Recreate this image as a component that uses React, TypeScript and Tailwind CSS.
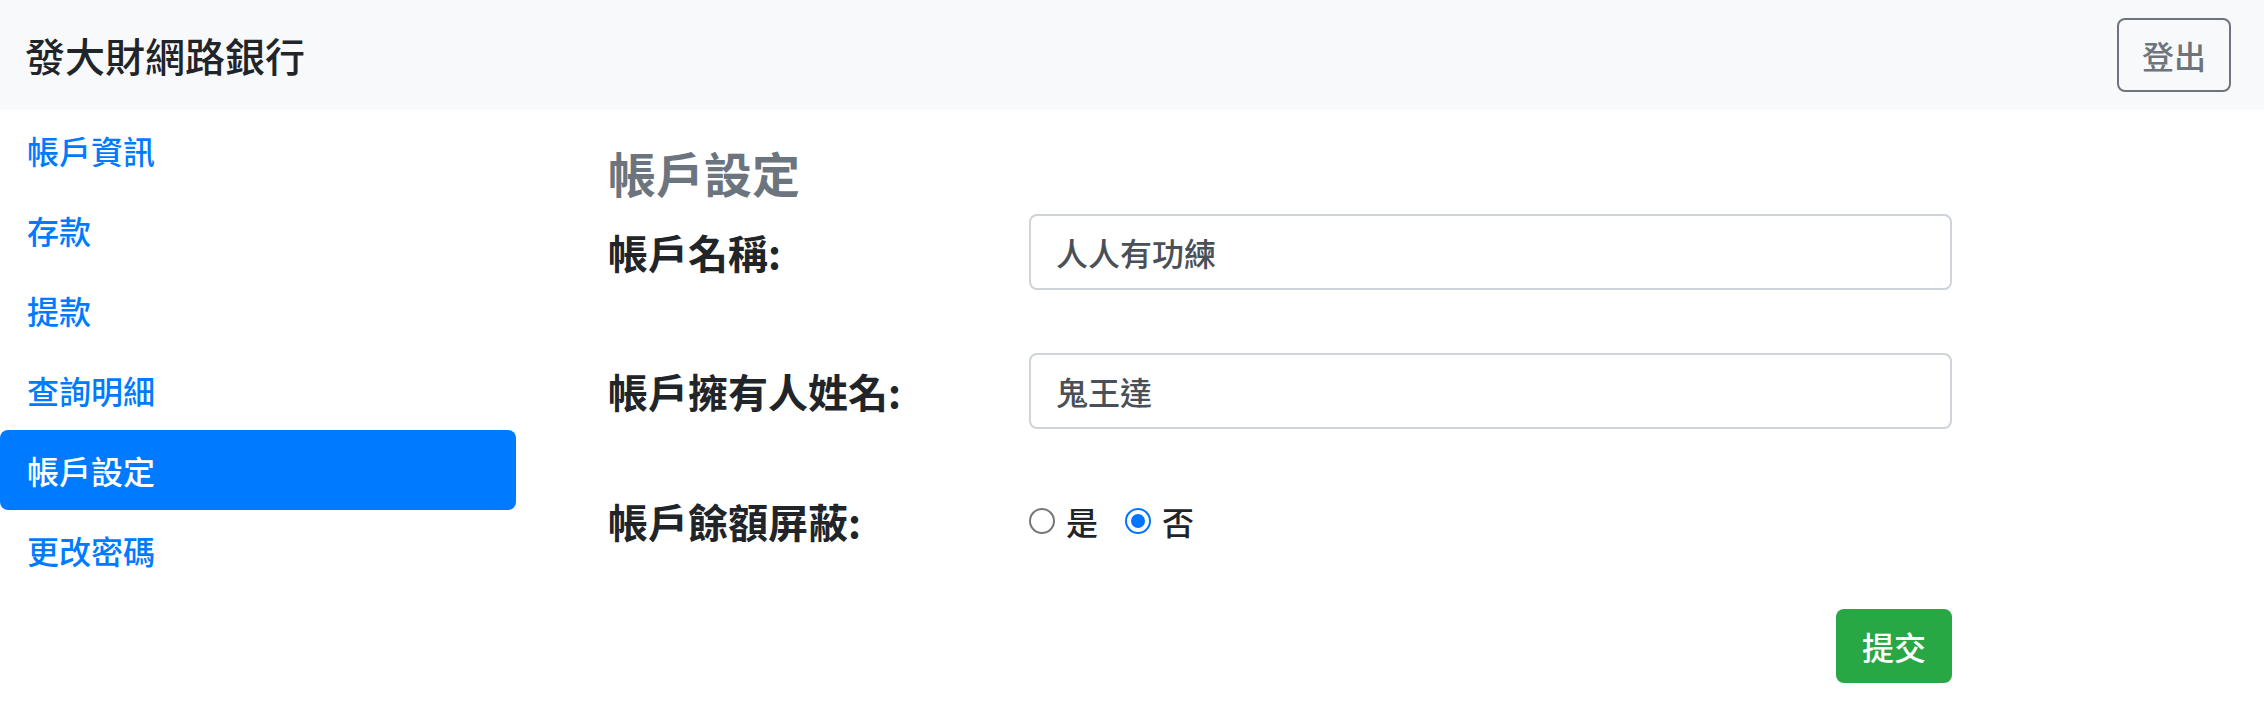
const FONT = "font-['Noto_Sans_CJK_TC','Noto_Sans',sans-serif]";

const NAV_ITEMS = ["帳戶資訊", "存款", "提款", "查詢明細", "帳戶設定", "更改密碼"];
const ACTIVE = "帳戶設定";

function Radio({ checked, label }: { checked: boolean; label: string }) {
  return (
    <label className="flex items-center">
      {checked ? (
        <span className="flex h-[26px] w-[26px] items-center justify-center rounded-full border-[2px] border-[#0075ff] bg-white">
          <span className="h-[14px] w-[14px] rounded-full bg-[#0075ff]" />
        </span>
      ) : (
        <span className="h-[26px] w-[26px] rounded-full border-[2px] border-[#767676] bg-white" />
      )}
      <span className="ml-[11px] text-[32px] font-medium leading-[48px] text-[#212529]">{label}</span>
    </label>
  );
}

function FieldRow({ label, children, className = "" }: { label: string; children: React.ReactNode; className?: string }) {
  return (
    <div className={`flex items-center ${className}`}>
      <div className="w-[421px] shrink-0 text-[40px] font-bold leading-[60px] text-[#212529]">{label}</div>
      <div className="flex-1">{children}</div>
    </div>
  );
}

export default function App() {
  return (
    <div className={`min-h-[715px] w-full bg-white ${FONT}`}>
      <header className="flex h-[110px] items-center justify-between bg-[#f8f9fa] pl-[25px] pr-[33px]">
        <span className="text-[40px] font-medium leading-[60px] text-[#212529]">發大財網路銀行</span>
        <button className="flex h-[74px] w-[114px] items-center justify-center rounded-[8px] border-[2px] border-[#6c757d] text-[32px] font-medium text-[#6c757d]">
          登出
        </button>
      </header>

      <div className="flex">
        <nav className="flex w-[516px] shrink-0 flex-col">
          {NAV_ITEMS.map((item) => (
            <a
              key={item}
              className={`flex h-[80px] items-center pl-[27px] text-[32px] font-medium leading-[48px] ${
                item === ACTIVE ? "rounded-[8px] bg-[#007bff] text-white" : "text-[#007bff]"
              }`}
            >
              {item}
            </a>
          ))}
        </nav>

        <main className="w-[1344px] pl-[92px] pt-[33px] box-content">
          <h4 className="text-[48px] font-bold leading-[58px] text-[#6c757d]">帳戶設定</h4>

          <FieldRow label="帳戶名稱:" className="mt-[13px]">
            <div className="flex h-[76px] items-center rounded-[8px] border-[2px] border-[#ced4da] px-[25px] text-[32px] font-medium text-[#495057]">
              人人有功練
            </div>
          </FieldRow>

          <FieldRow label="帳戶擁有人姓名:" className="mt-[63px]">
            <div className="flex h-[76px] items-center rounded-[8px] border-[2px] border-[#ced4da] px-[25px] text-[32px] font-medium text-[#495057]">
              鬼王達
            </div>
          </FieldRow>

          <FieldRow label="帳戶餘額屏蔽:" className="mt-[62px]">
            <div className="flex items-center gap-[27px]">
              <Radio checked={false} label="是" />
              <Radio checked label="否" />
            </div>
          </FieldRow>

          <div className="mt-[58px] flex justify-end">
            <button className="flex h-[74px] w-[116px] items-center justify-center rounded-[8px] bg-[#28a745] text-[32px] font-medium text-white">
              提交
            </button>
          </div>
        </main>
      </div>
    </div>
  );
}
